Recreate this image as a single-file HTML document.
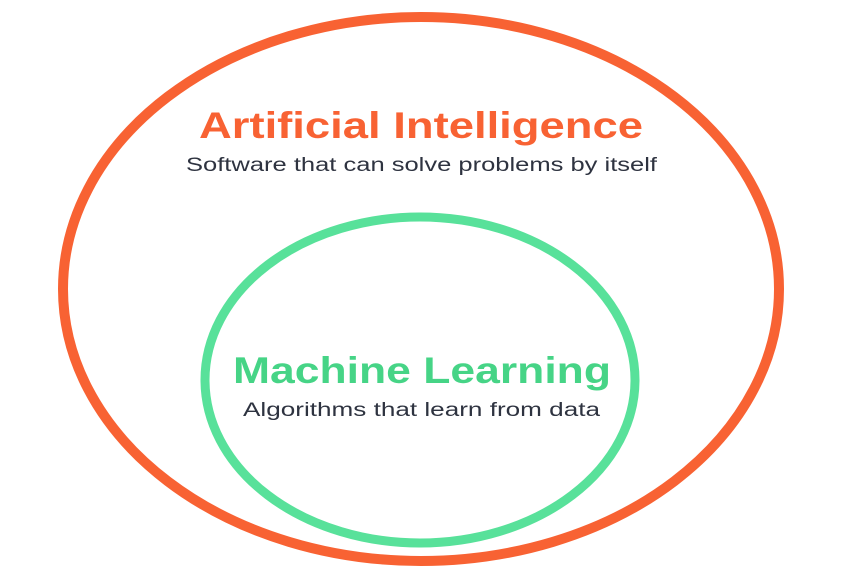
<!DOCTYPE html>
<html><head><meta charset="utf-8"><style>
html,body{margin:0;padding:0;background:#fff;width:861px;height:578px;overflow:hidden}
</style></head><body>
<svg width="861" height="578" viewBox="0 0 861 578" xmlns="http://www.w3.org/2000/svg">
<ellipse cx="421" cy="289" rx="358" ry="272" fill="none" stroke="#f86233" stroke-width="10"/>
<ellipse cx="420" cy="380" rx="215" ry="163" fill="none" stroke="#58e19a" stroke-width="9"/>
<g font-family="Liberation Sans, sans-serif" text-anchor="start">
<text x="199" y="138" font-size="37" font-weight="bold" fill="#f86233" textLength="444" lengthAdjust="spacingAndGlyphs">Artificial Intelligence</text>
<text x="186" y="171" font-size="19" fill="#2e3340" textLength="471" lengthAdjust="spacingAndGlyphs">Software that can solve problems by itself</text>
<text x="233" y="383" font-size="37" font-weight="bold" fill="#46d486" textLength="378" lengthAdjust="spacingAndGlyphs">Machine Learning</text>
<text x="243" y="416" font-size="19" fill="#2e3340" textLength="357" lengthAdjust="spacingAndGlyphs">Algorithms that learn from data</text>
</g>
</svg>
</body></html>
